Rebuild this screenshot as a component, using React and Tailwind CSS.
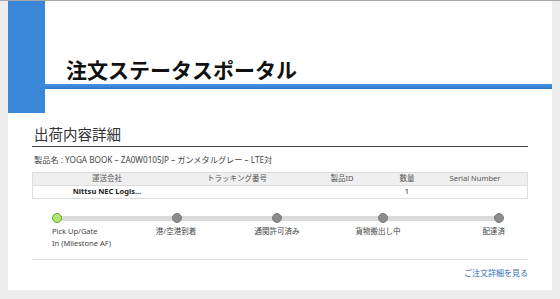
import React from "react";

const font = { fontFamily: '"Noto Sans", "Noto Sans CJK JP", sans-serif' };

const columns = [
  { label: "運送会社", w: "w-[148px]" },
  { label: "トラッキング番号", w: "w-[112px]" },
  { label: "製品ID", w: "w-[98px]" },
  { label: "数量", w: "w-[32px]" },
  { label: "Serial Number", w: "flex-1" },
];

const row = ["Nittsu NEC Logis...", "", "", "1", ""];

// step positions along the track (px from first dot)
const steps = [0, 120, 220, 326, 442];

const App = () => {
  return (
    <div
      className="w-[560px] h-[299px] bg-[#ededed] border-t border-[#a8a8a8] px-[8px] overflow-hidden"
      style={font}
    >
      <div className="bg-white h-[289px] flex flex-col">
        {/* Header */}
        <div className="flex h-[112px]">
          <div className="w-[37px] h-[112px] bg-[#3a86d7]" />
          <div className="flex-1 flex flex-col">
            <h1 className="mt-[56px] pl-[21px] h-[26px] text-[21px] leading-[26px] font-bold text-[#111]">
              注文ステータスポータル
            </h1>
            <div className="mt-[1px] h-[5px] bg-gradient-to-b from-[#4a92de] to-[#2f79cc]" />
          </div>
        </div>

        {/* Content */}
        <div className="px-[24px] flex flex-col">
          <h2 className="mt-[12px] pl-[2px] text-[14.5px] leading-[19px] text-[#333] pb-[2px] border-b border-[#444]">
            出荷内容詳細
          </h2>
          <p className="mt-[7px] pl-[2px] text-[8.2px] leading-[12px] text-[#444]">
            製品名 : YOGA BOOK – ZA0W0105JP – ガンメタルグレー – LTE対
          </p>

          {/* Table */}
          <div className="mt-[6px] border border-[#dcdcdc] text-[7.5px]">
            <div className="flex h-[13px] bg-[#efefef] border-b border-[#dcdcdc] text-[#555]">
              {columns.map((c) => (
                <div key={c.label} className={`${c.w} flex items-center justify-center`}>
                  {c.label}
                </div>
              ))}
            </div>
            <div className="flex h-[12px] text-[#222]">
              {row.map((v, i) => (
                <div
                  key={i}
                  className={`${columns[i].w} flex items-center justify-center ${i === 0 ? "font-bold" : ""}`}
                >
                  {v}
                </div>
              ))}
            </div>
          </div>

          {/* Progress */}
          <div className="mt-[14px] ml-[25px] w-[442px] h-[10px] relative">
            <div className="absolute left-0 right-0 top-[3px] h-[5px] bg-[#dadada]" />
            {steps.map((x, i) => (
              <div
                key={x}
                className={`absolute top-0 w-[10px] h-[10px] rounded-full -ml-[5px] ${
                  i === 0
                    ? "bg-[#b7e27a] border-[1.5px] border-[#5fae1e]"
                    : "bg-[#8c8c8c] border border-[#7a7a7a]"
                }`}
                style={{ left: x }}
              />
            ))}
          </div>
          <div className="mt-[2px] flex text-[7.5px] leading-[12px] text-[#444]">
            <div className="ml-[20px] w-[74px]">
              Pick Up/Gate
              <br />
              In (Milestone AF)
            </div>
            <div className="w-[100px] text-center">港/空港到着</div>
            <div className="w-[102px] text-center">通関許可済み</div>
            <div className="w-[100px] text-center">貨物搬出し中</div>
            <div className="flex-1 text-right pr-[23px]">配達済</div>
          </div>

          <div className="mt-[10px] border-t border-[#d8d8d8]" />
          <div className="mt-[7px] flex justify-end">
            <a className="text-[8px] leading-[12px] text-[#2f6fba]">ご注文詳細を見る</a>
          </div>
        </div>
      </div>
    </div>
  );
};

export default App;
